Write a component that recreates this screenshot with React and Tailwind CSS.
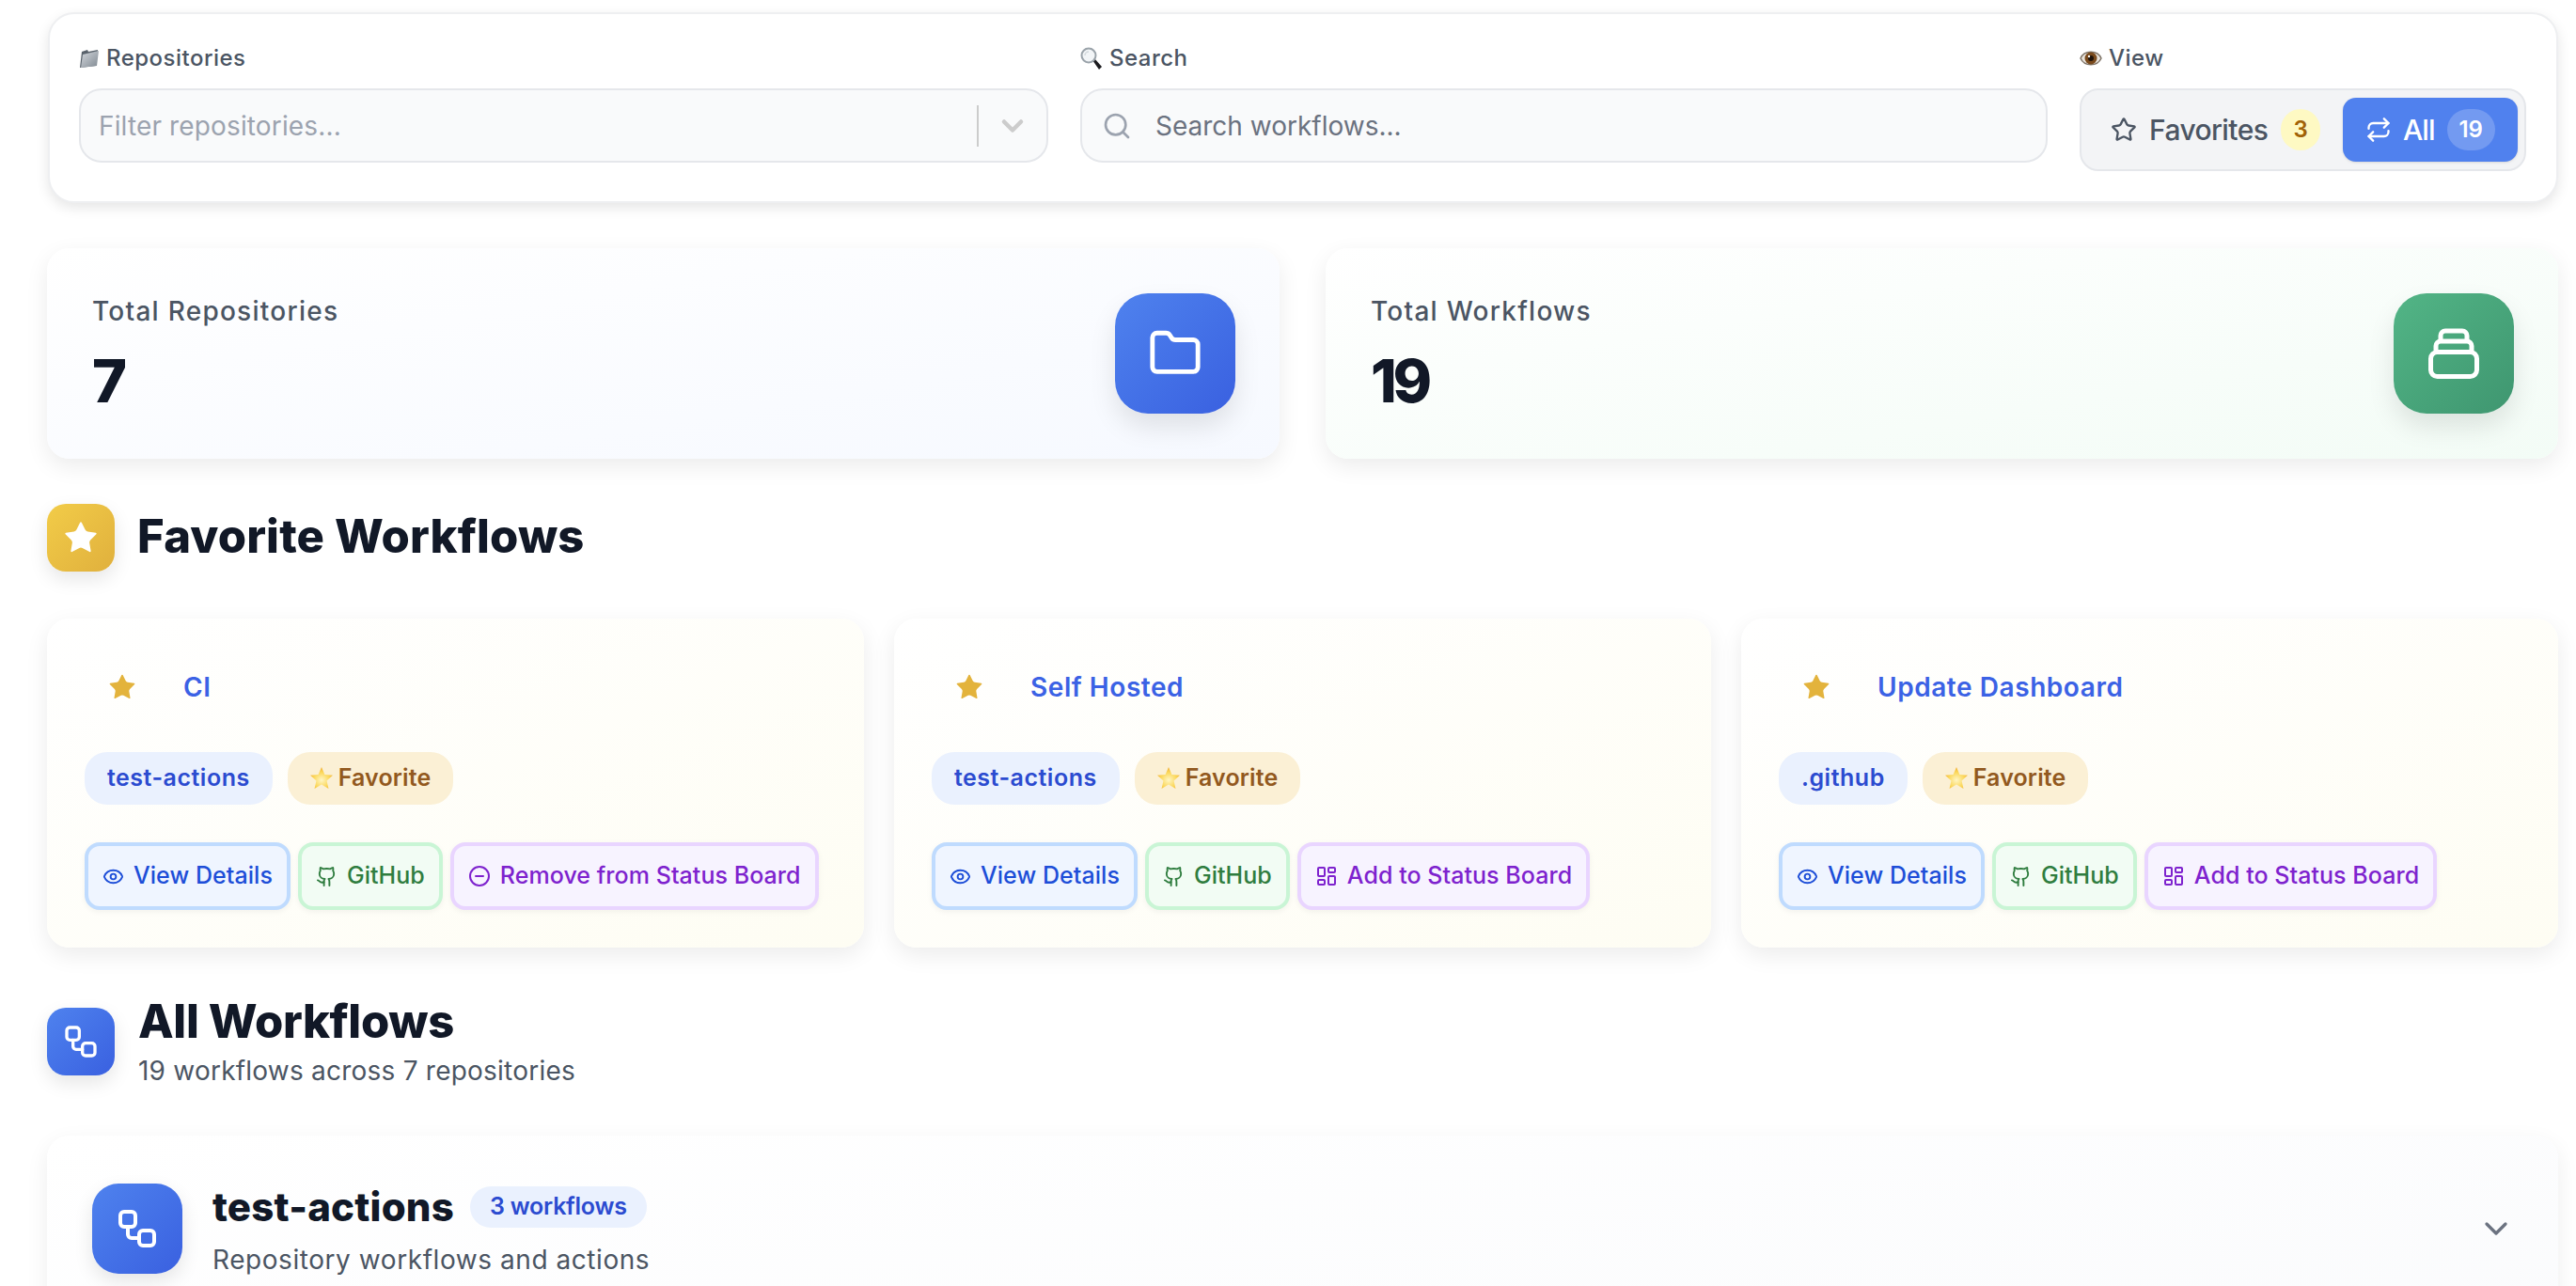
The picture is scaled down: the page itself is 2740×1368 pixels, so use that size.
import React from 'react';
import {
  ChevronDown,
  CircleMinus,
  Eye,
  Folder,
  Github,
  LayoutDashboard,
  Repeat,
  Search,
  Star,
  Workflow,
} from 'lucide-react';

const FAVORITES = [
  { name: 'CI', repo: 'test-actions', onBoard: true },
  { name: 'Self Hosted', repo: 'test-actions', onBoard: false },
  { name: 'Update Dashboard', repo: '.github', onBoard: false },
];

// small emoji look-alikes, there is no colour emoji font here
const FolderEmoji = () => (
  <svg width="22" height="22" viewBox="0 0 22 22" className="shrink-0">
    <defs>
      <linearGradient id="folderFill" x1="0" y1="0" x2="1" y2="1">
        <stop offset="0" stopColor="#d5d9de" />
        <stop offset="1" stopColor="#7f8891" />
      </linearGradient>
    </defs>
    <path d="M3 4l6-2 1 2 10-2-2 17L1 21z" fill="#59626b" />
    <path d="M4 7l17-4-2 16-17 2z" fill="url(#folderFill)" />
  </svg>
);

const SearchEmoji = () => (
  <svg width="24" height="24" viewBox="0 0 24 24" className="shrink-0">
    <path d="M13 14l2-2 8 9-3 3z" fill="#1b1b1f" />
    <circle cx="9" cy="9" r="7.5" fill="#f2f5f7" stroke="#9aa3aa" strokeWidth="2" />
    <path d="M5 9a4 4 0 0 1 4-4" fill="none" stroke="#d3d9dd" strokeWidth="1.5" />
  </svg>
);

const EyeEmoji = () => (
  <svg width="24" height="22" viewBox="0 0 24 22" className="shrink-0">
    <path d="M1 11C5 2 19 2 23 11 19 20 5 20 1 11z" fill="#e9e4dd" stroke="#7f7468" strokeWidth="1.5" />
    <circle cx="12" cy="11" r="6.5" fill="#7a4a1c" />
    <circle cx="12" cy="11" r="3" fill="#1f130a" />
    <circle cx="10" cy="9" r="1.2" fill="#ffffff" />
  </svg>
);

const StarEmoji = ({ id }) => (
  <svg width="24" height="26" viewBox="0 0 24 26" className="shrink-0">
    <defs>
      <radialGradient id={id} cx="0.5" cy="0.6" r="0.6">
        <stop offset="0" stopColor="#fff6c4" />
        <stop offset="0.6" stopColor="#fbd75a" />
        <stop offset="1" stopColor="#f0ab2e" />
      </radialGradient>
    </defs>
    <path d="M12 1l3.4 8 8.6.8-6.5 5.6 2 8.6L12 19.500 4.500 24l2-8.600L0 9.800 8.600 9z" fill={`url(#${id})`} />
  </svg>
);

const StackIcon = () => (
  <svg width="54" height="54" viewBox="0 0 54 54" fill="none" stroke="#ffffff" strokeWidth="5" strokeLinecap="round">
    <rect x="2.500" y="25.500" width="49" height="26" rx="7" />
    <path d="M8 23v-4a5 5 0 0 1 5-5h28a5 5 0 0 1 5 5v4" />
    <path d="M13 12V8a5 5 0 0 1 5-5h18a5 5 0 0 1 5 5v4" />
  </svg>
);

const FieldLabel = ({ icon, children }) => (
  <div className="flex h-[28px] items-center gap-[7px] text-[24px] font-medium tracking-[0.02em] text-[#4b5563]">
    {icon}
    <span>{children}</span>
  </div>
);

const FilterBar = () => (
  <div className="ml-px flex gap-[34px] rounded-[28px] border-2 border-[#eeeff1] bg-white pt-[33px] pr-[32px] pb-[32px] pl-[31px] shadow-[0_5px_14px_rgba(0,0,0,0.1)]">
    <div className="w-[1031px] shrink-0">
      <FieldLabel icon={<FolderEmoji />}>Repositories</FieldLabel>
      <div className="mt-[18px] flex h-[79px] items-center rounded-[24px] border-2 border-[#e5e7eb] bg-[#f9fafb] pl-[19px]">
        <input
          placeholder="Filter repositories..."
          className="min-w-0 flex-1 bg-transparent text-[28px] tracking-[0.005em] text-gray-700 outline-none placeholder:text-[#9ca3af]"
        />
        <div className="h-[44px] w-[2px] bg-[#cccccc]" />
        <div className="flex w-[72px] justify-center">
          <ChevronDown size={36} strokeWidth={3} className="text-[#cccccc]" />
        </div>
      </div>
    </div>
    <div className="flex-1">
      <FieldLabel icon={<SearchEmoji />}>Search</FieldLabel>
      <div className="mt-[18px] flex h-[79px] items-center rounded-[24px] border-2 border-[#e5e7eb] bg-[#f9fafb] pl-[21px]">
        <Search size={32} strokeWidth={2} className="shrink-0 text-[#9ca3af]" />
        <input
          placeholder="Search workflows..."
          className="ml-[25px] min-w-0 flex-1 bg-transparent text-[28px] text-gray-700 outline-none placeholder:text-[#6b7280]"
        />
      </div>
    </div>
    <div className="w-[475px] shrink-0">
      <FieldLabel icon={<EyeEmoji />}>View</FieldLabel>
      <div className="mt-[18px] flex h-[88px] items-center rounded-[20px] border-2 border-[#e5e7eb] bg-[#f3f4f6] py-[8px] pr-[7px] pl-[31px]">
        <Star size={28} strokeWidth={2} className="shrink-0 text-[#4b5563]" />
        <span className="ml-[13px] text-[30px] font-medium tracking-[-0.02em] text-[#4b5563]">Favorites</span>
        <span className="ml-[14px] flex h-[44px] w-[42px] items-center justify-center rounded-full bg-[#fef9c3] text-[24px] font-semibold text-[#a16207]">3</span>
        <button className="ml-auto flex h-[68px] w-[186px] items-center rounded-[14px] bg-[#5081ee] pl-[24px] text-white shadow-sm">
          <Repeat size={28} strokeWidth={2} />
          <span className="ml-[12px] text-[30px] font-medium tracking-[-0.03em]">All</span>
          <span className="ml-[13px] flex h-[44px] w-[51px] items-center justify-center rounded-full bg-white/20 text-[24px] font-semibold">19</span>
        </button>
      </div>
    </div>
  </div>
);

const StatCard = ({ label, value, bg, iconBg, icon }) => (
  <div className={`flex h-[224px] flex-1 items-center justify-between rounded-[24px] py-[48px] pr-[47px] pl-[48px] shadow-[0_8px_24px_rgba(0,0,0,0.08)] ${bg}`}>
    <div>
      <div className="text-[28px] leading-[38px] font-medium tracking-[0.045em] text-[#4b5563]">{label}</div>
      <div className="mt-[20px] text-[63px] leading-[70px] font-extrabold tracking-[-0.07em] text-[#111827]">{value}</div>
    </div>
    <div className={`flex h-[128px] w-[128px] items-center justify-center rounded-[35px] shadow-[0_14px_28px_rgba(0,0,0,0.1)] ${iconBg}`}>
      {icon}
    </div>
  </div>
);

const ActionButton = ({ icon, children, className }) => (
  <button className={`flex h-[72px] items-center gap-[10px] rounded-[16px] border-4 px-[15px] text-[25px] font-medium tracking-[0.002em] whitespace-nowrap shadow-[0_2px_6px_rgba(0,0,0,0.05)] ${className}`}>
    {icon}
    {children}
  </button>
);

const FavoriteCard = ({ item }) => (
  <div className="h-[350px] w-[869px] rounded-[24px] bg-gradient-to-br from-white to-[#fefdf3] p-[40px] shadow-[0_8px_24px_rgba(0,0,0,0.08)]">
    <div className="flex h-[66px] items-center">
      <div className="flex w-[80px] justify-center">
        <Star size={32} fill="#e3b33c" strokeWidth={0} />
      </div>
      <span className="ml-[25px] text-[28px] font-semibold tracking-[0.02em] text-[#3b62e5]">{item.name}</span>
    </div>
    <div className="mt-[36px] flex gap-[16px]">
      <span className="flex h-[56px] items-center rounded-[24px] bg-[#eaf1fe] px-[24px] text-[25px] font-semibold tracking-[0.02em] text-[#2b4bd0]">{item.repo}</span>
      <span className="flex h-[56px] items-center gap-[6px] rounded-[24px] bg-[#fbf0d5] px-[24px] text-[25px] font-semibold tracking-[0.005em] text-[#92591e]">
        <StarEmoji id={`starEmoji${item.name.length}`} />
        Favorite
      </span>
    </div>
    <div className="mt-[40px] flex gap-[8px]">
      <ActionButton icon={<Eye size={23} strokeWidth={2} />} className="border-[#bfdbfe] bg-[#eff5ff] text-[#1d4ed8]">View Details</ActionButton>
      <ActionButton icon={<Github size={23} strokeWidth={2} />} className="border-[#c9f5d5] bg-[#f2fcf4] text-[#2f7d3f]">GitHub</ActionButton>
      {item.onBoard ? (
        <ActionButton icon={<CircleMinus size={24} strokeWidth={2} />} className="border-[#e9d5ff] bg-[#f7f3ff] text-[#7e22ce]">Remove from Status Board</ActionButton>
      ) : (
        <ActionButton icon={<LayoutDashboard size={24} strokeWidth={2} />} className="border-[#e9d5ff] bg-[#f7f3ff] text-[#7e22ce]">Add to Status Board</ActionButton>
      )}
    </div>
  </div>
);

const App = () => {
  return (
    <div className="h-[1368px] overflow-hidden bg-white pt-[13px] pr-[19px] pl-[50px] font-['Inter',sans-serif]">
      <FilterBar />

      <div className="mt-[48px] flex gap-[49px]">
        <StatCard
          label="Total Repositories"
          value="7"
          bg="bg-gradient-to-br from-white to-[#f6f9ff]"
          iconBg="bg-gradient-to-br from-[#4f82ee] to-[#3a60e0]"
          icon={<Folder size={58} strokeWidth={2} className="text-white" />}
        />
        <StatCard
          label="Total Workflows"
          value="19"
          bg="bg-gradient-to-br from-white to-[#f3fcf6]"
          iconBg="bg-gradient-to-br from-[#52b586] to-[#3f9670]"
          icon={<StackIcon />}
        />
      </div>

      <div className="mt-[48px] flex items-center gap-[24px]">
        <div className="flex h-[72px] w-[72px] items-center justify-center rounded-[20px] bg-gradient-to-br from-[#f2cc48] to-[#e0b03d] shadow-[0_8px_20px_rgba(0,0,0,0.1)]">
          <Star size={40} fill="#ffffff" strokeWidth={0} />
        </div>
        <h2 className="-mt-[2px] text-[49px] font-extrabold tracking-[0.003em] text-[#111827]">Favorite Workflows</h2>
      </div>

      <div className="mt-[50px] flex gap-[32px]">
        {FAVORITES.map((item) => (
          <FavoriteCard key={item.name} item={item} />
        ))}
      </div>

      <div className="mt-[50px] flex items-center gap-[25px]">
        <div className="flex h-[72px] w-[72px] items-center justify-center rounded-[20px] bg-gradient-to-br from-[#4f82ee] to-[#3a60e0] shadow-[0_8px_20px_rgba(0,0,0,0.1)]">
          <Workflow size={40} strokeWidth={2} className="text-white" />
        </div>
        <div className="pt-[4px]">
          <h2 className="text-[49px] leading-[50px] font-extrabold tracking-[-0.007em] text-[#111827]">All Workflows</h2>
          <p className="mt-[9px] text-[28px] leading-[36px] tracking-[0.008em] text-[#4b5563]">19 workflows across 7 repositories</p>
        </div>
      </div>

      {/* repo card runs past the bottom of the window */}
      <div className="mt-[51px] flex h-[400px] items-start rounded-[24px] bg-gradient-to-br from-white to-[#f9fafc] px-[48px] pt-[51px] shadow-[0_8px_24px_rgba(0,0,0,0.07)]">
        <div className="flex h-[96px] w-[96px] shrink-0 items-center justify-center rounded-[28px] bg-gradient-to-br from-[#4f82ee] to-[#3a60e0] shadow-[0_8px_20px_rgba(0,0,0,0.1)]">
          <Workflow size={48} strokeWidth={2} className="text-white" />
        </div>
        <div className="ml-[32px]">
          <div className="flex items-center gap-[17px]">
            <span className="text-[42px] leading-[50px] font-extrabold tracking-[0.005em] text-[#111827]">test-actions</span>
            <span className="flex h-[44px] items-center rounded-full bg-[#eaf1fe] px-[21px] text-[25px] font-semibold tracking-[-0.01em] text-[#2b4bd0]">3 workflows</span>
          </div>
          <p className="mt-[11px] text-[28px] leading-[40px] tracking-[0.02em] text-[#4b5563]">Repository workflows and actions</p>
        </div>
        <ChevronDown size={40} strokeWidth={2} className="mt-[28px] ml-auto -mr-[2px] text-[#6b7280]" />
      </div>
    </div>
  );
};

export default App;
